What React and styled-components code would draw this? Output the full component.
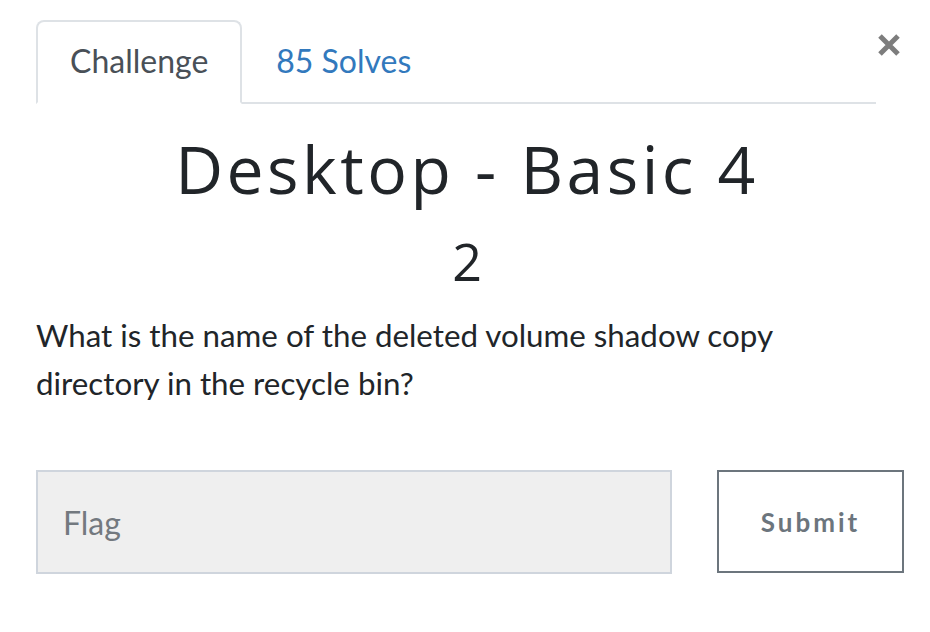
import React from "react";
import styled, { createGlobalStyle } from "styled-components";

const GlobalStyle = createGlobalStyle`
  html, body { margin: 0; padding: 0; background: #fff; }
  body { font-family: Lato, "Noto Sans", sans-serif; color: #212529; }
  * { box-sizing: border-box; }
`;

const Modal = styled.div`
  width: 930px;
  padding: 20px 32px 0 36px;
`;

const Header = styled.div`
  display: flex;
  align-items: flex-start;
  justify-content: space-between;
`;

const TabList = styled.div`
  display: flex;
  flex: 0 0 840px;
  border-bottom: 2px solid #dee2e6;
`;

const Tab = styled.div`
  height: 84px;
  margin-bottom: -2px;
  padding: 0 32px 4px;
  display: flex;
  align-items: center;
  font-size: 32px;
  border: 2px solid ${(p) => (p.$active ? "#dee2e6" : "transparent")};
  border-bottom-color: ${(p) => (p.$active ? "#fff" : "transparent")};
  border-radius: 8px 8px 0 0;
  color: ${(p) => (p.$active ? "#495057" : "#3279bd")};
  background: ${(p) => (p.$active ? "#fff" : "transparent")};
`;

const Close = styled.button`
  border: 0;
  background: none;
  padding: 0;
  margin: 13px -3px 0 0;
  width: 24px;
  height: 24px;
  color: #7d7d7d;
  display: block;
  cursor: pointer;
`;

const Title = styled.h3`
  margin: 24px 0 0;
  text-align: center;
  font-family: "Open Sans", "Noto Sans", sans-serif;
  font-weight: 400;
  font-size: 66px;
  line-height: 80px;
  letter-spacing: 3.5px;
  color: #212529;
`;

const Value = styled.h4`
  margin: 17px 0 0;
  text-align: center;
  font-family: "Open Sans", "Noto Sans", sans-serif;
  font-weight: 400;
  font-size: 52px;
  line-height: 72px;
  color: #212529;
`;

const Description = styled.p`
  margin: 14px 0 0;
  font-size: 31.3px;
  line-height: 48px;
  color: #212529;
`;

const SubmitRow = styled.form`
  display: flex;
  align-items: flex-start;
  gap: 45px;
  margin-top: 63px;
`;

const FlagInput = styled.input`
  flex: 0 0 636px;
  width: 636px;
  height: 104px;
  background: #efefef;
  border: 2px solid #cfd5dd;
  padding: 0 25px;
  font-family: Lato, sans-serif;
  font-size: 32px;
  color: #495057;
  outline: none;
  &::placeholder { color: #73797f; }
`;

const SubmitButton = styled.button`
  flex: 0 0 187px;
  width: 187px;
  height: 103px;
  background: #fff;
  border: 2px solid #6c757d;
  color: #6c757d;
  font-family: Lato, sans-serif;
  font-weight: 700;
  font-size: 26px;
  letter-spacing: 3px;
  cursor: pointer;
`;

export default function App() {
  return (
    <>
      <GlobalStyle />
      <Modal>
        <Header>
          <TabList>
            <Tab $active>Challenge</Tab>
            <Tab>85 Solves</Tab>
          </TabList>
          <Close aria-label="Close">
            <svg width="24" height="24" viewBox="0 0 24 24">
              <path d="M3 3 L21 21 M21 3 L3 21" stroke="currentColor" strokeWidth="5" fill="none" />
            </svg>
          </Close>
        </Header>
        <Title>Desktop - Basic 4</Title>
        <Value>2</Value>
        <Description>
          What is the name of the deleted volume shadow copy directory in the recycle bin?
        </Description>
        <SubmitRow onSubmit={(e) => e.preventDefault()}>
          <FlagInput placeholder="Flag" />
          <SubmitButton type="submit">Submit</SubmitButton>
        </SubmitRow>
      </Modal>
    </>
  );
}
